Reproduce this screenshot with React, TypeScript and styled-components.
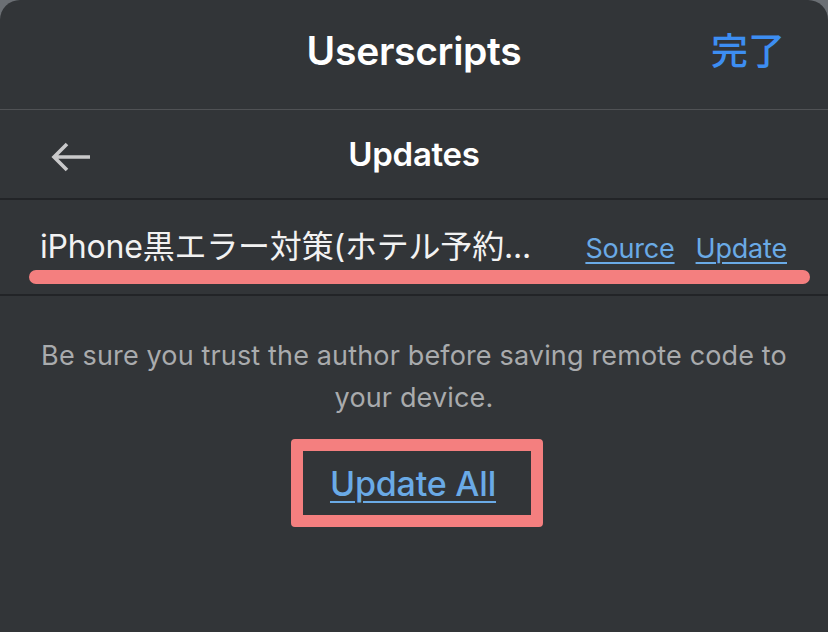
import React from "react";
import styled, { createGlobalStyle } from "styled-components";

const Global = createGlobalStyle`
  *, *::before, *::after { box-sizing: border-box; }
  html, body { margin: 0; padding: 0; background: #6b6f74; }
  body { font-family: Inter, "Noto Sans CJK JP", "Noto Sans", sans-serif; }
  #root { width: 828px; height: 632px; }
`;

const Sheet = styled.div`
  width: 828px;
  height: 632px;
  background: #323538;
  border-radius: 20px 20px 0 0;
  display: flex;
  flex-direction: column;
  overflow: hidden;
  color: #ffffff;
`;

const TopBar = styled.header`
  height: 110px;
  flex: none;
  border-bottom: 1px solid #505255;
  display: grid;
  grid-template-columns: 1fr auto 1fr;
  align-items: center;
  padding: 0 43px;
`;

const TopTitle = styled.h1`
  margin: 0;
  font-size: 39px;
  font-weight: 600;
  letter-spacing: -0.3px;
  padding-bottom: 8px;
`;

const DoneButton = styled.button`
  justify-self: end;
  background: none;
  border: 0;
  padding: 0 0 12px 0;
  color: #3d8ef2;
  font-family: "Noto Sans CJK JP", sans-serif;
  font-size: 37px;
  font-weight: 500;
`;

const SubBar = styled.div`
  height: 90px;
  flex: none;
  border-bottom: 2px solid #222427;
  display: grid;
  grid-template-columns: 1fr auto 1fr;
  align-items: center;
  padding: 0 50px;
`;

const BackButton = styled.button`
  justify-self: start;
  background: none;
  border: 0;
  padding: 0;
  display: flex;
  align-items: center;
  margin-top: 6px;
`;

const SubTitle = styled.h2`
  margin: 0;
  font-size: 33px;
  font-weight: 600;
  letter-spacing: -0.3px;
`;

const ItemRow = styled.div`
  height: 96px;
  flex: none;
  border-bottom: 2px solid #222427;
  display: flex;
  flex-direction: column;
  padding: 26px 18px 0 29px;
`;

const ItemLine = styled.div`
  display: flex;
  align-items: baseline;
  height: 42px;
  line-height: 42px;
  padding-left: 11px;
  padding-right: 23px;
`;

const ItemName = styled.span`
  flex: 1;
  font-family: Inter, "Noto Sans CJK JP", sans-serif;
  font-size: 32px;
  font-weight: 400;
  color: #f2f2f2;
  white-space: nowrap;
  letter-spacing: -0.2px;
`;

const ItemLink = styled.a<{ $gap?: number }>`
  color: #6aaae6;
  font-size: 27px;
  letter-spacing: -0.2px;
  text-decoration: underline;
  text-underline-offset: 4px;
  text-decoration-thickness: 1.5px;
  margin-left: ${(p) => p.$gap ?? 0}px;
  cursor: pointer;
`;

const Highlight = styled.div`
  height: 14px;
  margin-top: 2px;
  border-radius: 7px;
  background: #f47f7f;
`;

const Body = styled.div`
  flex: 1;
  display: flex;
  flex-direction: column;
  align-items: center;
  padding: 39px 30px 0;
`;

const Notice = styled.p`
  margin: 0;
  text-align: center;
  font-size: 27px;
  line-height: 42px;
  color: #a9abad;
  letter-spacing: 0.15px;
`;

const BoxOutline = styled.div`
  margin: 20px 0 0 6px;
  width: 252px;
  height: 88px;
  border: 12px solid #f47f7f;
  border-radius: 4px;
  display: flex;
  align-items: center;
  justify-content: center;
  padding-right: 8px;
`;

const UpdateAll = styled.a`
  color: #6aaae6;
  font-size: 34px;
  font-weight: 500;
  letter-spacing: -0.2px;
  text-decoration: underline;
  text-underline-offset: 5px;
  text-decoration-thickness: 2px;
  cursor: pointer;
`;

const BackArrow = () => (
  <svg width="42" height="32" viewBox="0 0 42 32" fill="none">
    <path
      d="M40 16H4M17 3L4 16l13 13"
      stroke="#c9c9ca"
      strokeWidth="3.6"
      strokeLinecap="butt"
      strokeLinejoin="miter"
    />
  </svg>
);

export default function App() {
  return (
    <>
      <Global />
      <Sheet>
        <TopBar>
          <span />
          <TopTitle>Userscripts</TopTitle>
          <DoneButton>完了</DoneButton>
        </TopBar>
        <SubBar>
          <BackButton aria-label="Back">
            <BackArrow />
          </BackButton>
          <SubTitle>Updates</SubTitle>
          <span />
        </SubBar>
        <ItemRow>
          <ItemLine>
            <ItemName>iPhone黒エラー対策(ホテル予約...</ItemName>
            <ItemLink>Source</ItemLink>
            <ItemLink $gap={21}>Update</ItemLink>
          </ItemLine>
          <Highlight />
        </ItemRow>
        <Body>
          <Notice>
            Be sure you trust the author before saving remote code to your device.
          </Notice>
          <BoxOutline>
            <UpdateAll>Update All</UpdateAll>
          </BoxOutline>
        </Body>
      </Sheet>
    </>
  );
}
